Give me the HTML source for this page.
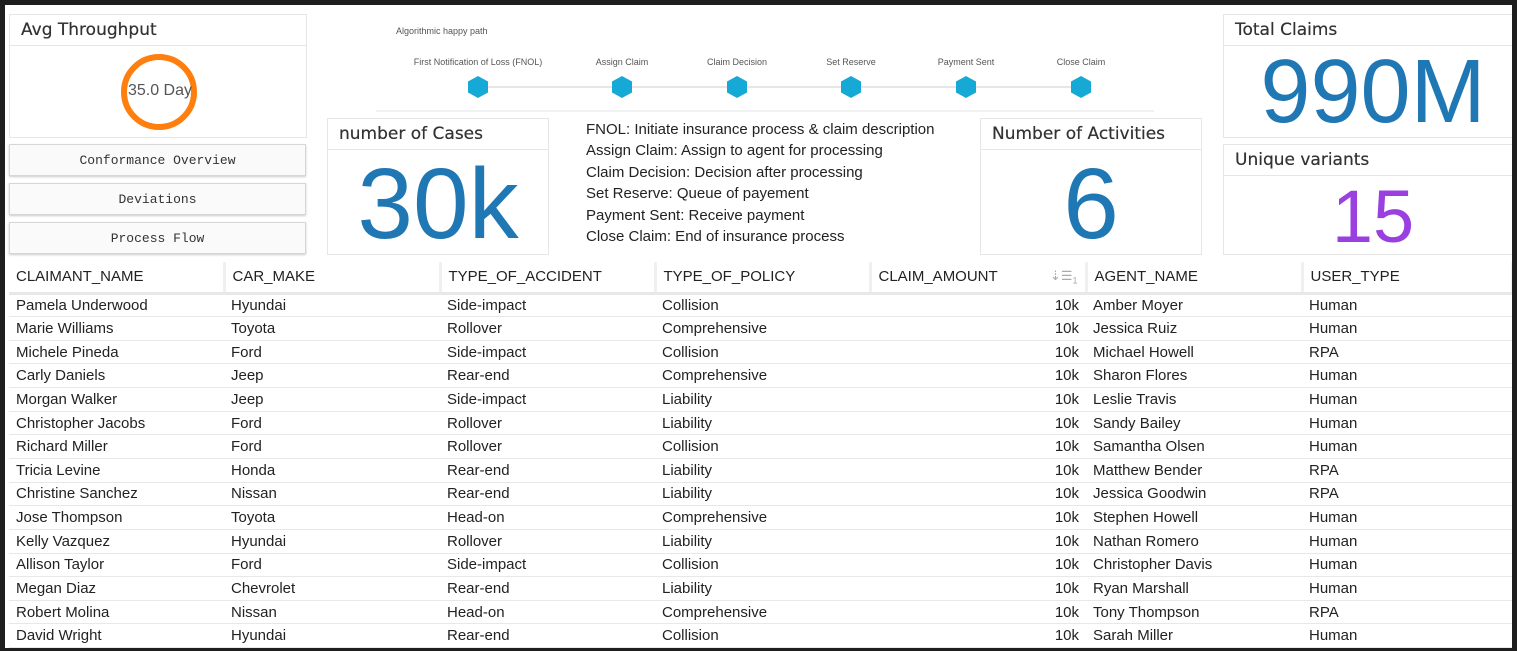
<!DOCTYPE html>
<html><head><meta charset="utf-8"><style>
*{box-sizing:border-box;margin:0;padding:0}
body{width:1517px;height:651px;background:#1e1e1e;position:relative;overflow:hidden;font-family:"Liberation Sans",sans-serif}
#pg{position:absolute;left:5px;top:5px;width:1507px;height:643px;background:#fff;overflow:hidden}
.a{position:absolute}
.card{position:absolute;border:1px solid #e6e6e6;background:#fff}
.card .h{height:31px;border-bottom:1px solid #e6e6e6;font-family:"DejaVu Sans",sans-serif;font-size:17px;color:#333;padding:5px 0 0 11px;text-shadow:0 0 0.4px #333}
.btn{position:absolute;left:4px;width:297px;height:32px;border:1px solid #d6d6d6;box-shadow:0 1px 2px #ccc;background:#fafafa;font-family:"Liberation Mono",monospace;font-size:13px;color:#333;text-align:center;line-height:31px}
.big{position:absolute;left:0;right:0;text-align:center;color:#1f77b4}
.pl{position:absolute;font-size:9px;color:#555;transform:translateX(-50%);white-space:nowrap;top:52px}
.txt{position:absolute;left:581px;top:114px;font-size:15px;color:#222;line-height:21.4px}
table{position:absolute;left:4px;top:257px;width:1503px;border-collapse:collapse;font-size:15px;color:#222;table-layout:fixed}
th{font-weight:normal;text-align:left;height:31px;padding:0 7px;border-right:3px solid #f0f0f0;border-bottom:3px solid #e8e8e8;color:#222}
td{height:23.65px;padding:0 7px;border-bottom:1px solid #e8e8e8;white-space:nowrap}
td.r{text-align:right}
</style></head><body><div id="pg">
<div class="card" style="left:4px;top:9px;width:298px;height:124px"><div class="h">Avg Throughput</div>
<div class="a" style="left:111px;top:39px;width:76px;height:76px;border:6px solid #ff7f0e;border-radius:50%"></div>
<div class="a" style="left:100px;top:67px;width:100px;text-align:center;font-size:16px;color:#555">35.0 Day</div></div>
<div class="btn" style="top:139px">Conformance Overview</div>
<div class="btn" style="top:178px">Deviations</div>
<div class="btn" style="top:217px">Process Flow</div>

<div class="a" style="left:391px;top:21px;font-size:9px;color:#555">Algorithmic happy path</div>
<div class="pl" style="left:473px">First Notification of Loss (FNOL)</div>
<div class="pl" style="left:617px">Assign Claim</div>
<div class="pl" style="left:732px">Claim Decision</div>
<div class="pl" style="left:846px">Set Reserve</div>
<div class="pl" style="left:961px">Payment Sent</div>
<div class="pl" style="left:1076px">Close Claim</div>
<svg class="a" style="left:0;top:0" width="1200" height="120">
<g stroke="#ddd" stroke-width="1.5"><line x1="473" y1="82" x2="607" y2="82"/><line x1="617" y1="82" x2="722" y2="82"/><line x1="732" y1="82" x2="836" y2="82"/><line x1="846" y1="82" x2="951" y2="82"/><line x1="961" y1="82" x2="1066" y2="82"/></g>
<g fill="#ddd"><path d="M607 78l7 4-7 4z"/><path d="M722 78l7 4-7 4z"/><path d="M836 78l7 4-7 4z"/><path d="M951 78l7 4-7 4z"/><path d="M1066 78l7 4-7 4z"/></g>
<g fill="#17a9d6"><path id="hx" d="M473 71l10 5.5v11l-10 5.5-10-5.5v-11z"/>
<use href="#hx" x="144"/><use href="#hx" x="259"/><use href="#hx" x="373"/><use href="#hx" x="488"/><use href="#hx" x="603"/></g>
<line x1="371" y1="106" x2="1149" y2="106" stroke="#e4e4e4"/></svg>

<div class="card" style="left:322px;top:113px;width:222px;height:137px"><div class="h">number of Cases</div><div class="big" style="top:28px;font-size:100px">30k</div></div>
<div class="txt">FNOL: Initiate insurance process &amp; claim description<br>Assign Claim: Assign to agent for processing<br>Claim Decision: Decision after processing<br>Set Reserve: Queue of payement<br>Payment Sent: Receive payment<br>Close Claim: End of insurance process</div>
<div class="card" style="left:975px;top:113px;width:222px;height:137px"><div class="h">Number of Activities</div><div class="big" style="top:28px;font-size:100px">6</div></div>
<div class="card" style="left:1218px;top:9px;width:300px;height:124px"><div class="h">Total Claims</div><div class="big" style="top:26px;font-size:90px">990M</div></div>
<div class="card" style="left:1218px;top:139px;width:300px;height:111px"><div class="h">Unique variants</div><div class="big" style="top:29px;font-size:74px;color:#9a3fe0">15</div></div>

<table>
<colgroup><col style="width:215px"><col style="width:216px"><col style="width:215px"><col style="width:215px"><col style="width:216px"><col style="width:216px"><col style="width:210px"></colgroup>
<tr><th>CLAIMANT_NAME</th><th>CAR_MAKE</th><th>TYPE_OF_ACCIDENT</th><th>TYPE_OF_POLICY</th><th>CLAIM_AMOUNT<span style="float:right;color:#aaa;font-size:13px">⇣☰<sub style="font-size:9px">1</sub></span></th><th>AGENT_NAME</th><th>USER_TYPE</th></tr>
<tr><td>Pamela Underwood</td><td>Hyundai</td><td>Side-impact</td><td>Collision</td><td class="r">10k</td><td>Amber Moyer</td><td>Human</td></tr>
<tr><td>Marie Williams</td><td>Toyota</td><td>Rollover</td><td>Comprehensive</td><td class="r">10k</td><td>Jessica Ruiz</td><td>Human</td></tr>
<tr><td>Michele Pineda</td><td>Ford</td><td>Side-impact</td><td>Collision</td><td class="r">10k</td><td>Michael Howell</td><td>RPA</td></tr>
<tr><td>Carly Daniels</td><td>Jeep</td><td>Rear-end</td><td>Comprehensive</td><td class="r">10k</td><td>Sharon Flores</td><td>Human</td></tr>
<tr><td>Morgan Walker</td><td>Jeep</td><td>Side-impact</td><td>Liability</td><td class="r">10k</td><td>Leslie Travis</td><td>Human</td></tr>
<tr><td>Christopher Jacobs</td><td>Ford</td><td>Rollover</td><td>Liability</td><td class="r">10k</td><td>Sandy Bailey</td><td>Human</td></tr>
<tr><td>Richard Miller</td><td>Ford</td><td>Rollover</td><td>Collision</td><td class="r">10k</td><td>Samantha Olsen</td><td>Human</td></tr>
<tr><td>Tricia Levine</td><td>Honda</td><td>Rear-end</td><td>Liability</td><td class="r">10k</td><td>Matthew Bender</td><td>RPA</td></tr>
<tr><td>Christine Sanchez</td><td>Nissan</td><td>Rear-end</td><td>Liability</td><td class="r">10k</td><td>Jessica Goodwin</td><td>RPA</td></tr>
<tr><td>Jose Thompson</td><td>Toyota</td><td>Head-on</td><td>Comprehensive</td><td class="r">10k</td><td>Stephen Howell</td><td>Human</td></tr>
<tr><td>Kelly Vazquez</td><td>Hyundai</td><td>Rollover</td><td>Liability</td><td class="r">10k</td><td>Nathan Romero</td><td>Human</td></tr>
<tr><td>Allison Taylor</td><td>Ford</td><td>Side-impact</td><td>Collision</td><td class="r">10k</td><td>Christopher Davis</td><td>Human</td></tr>
<tr><td>Megan Diaz</td><td>Chevrolet</td><td>Rear-end</td><td>Liability</td><td class="r">10k</td><td>Ryan Marshall</td><td>Human</td></tr>
<tr><td>Robert Molina</td><td>Nissan</td><td>Head-on</td><td>Comprehensive</td><td class="r">10k</td><td>Tony Thompson</td><td>RPA</td></tr>
<tr><td>David Wright</td><td>Hyundai</td><td>Rear-end</td><td>Collision</td><td class="r">10k</td><td>Sarah Miller</td><td>Human</td></tr>
</table>
</div></body></html>
